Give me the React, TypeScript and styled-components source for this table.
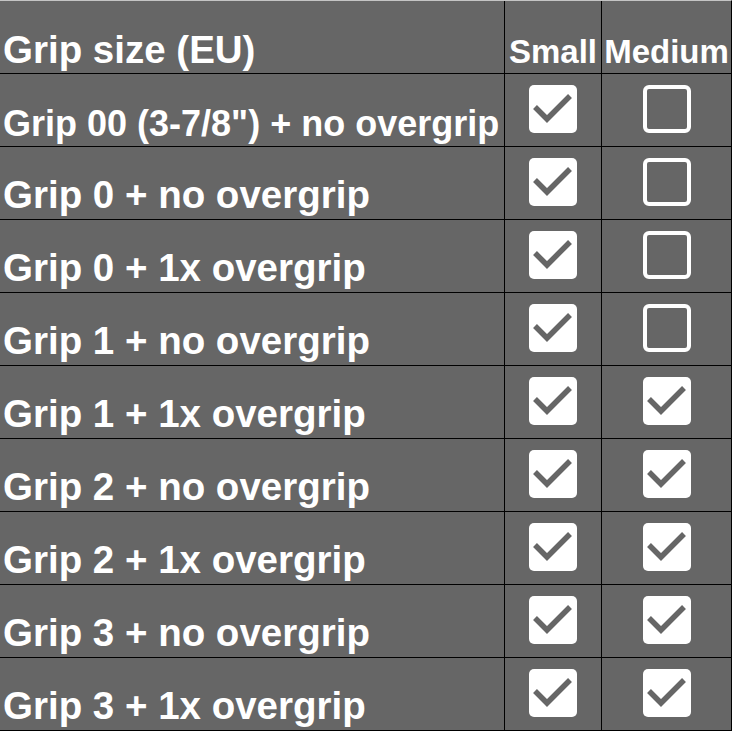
import React from "react";
import styled, { createGlobalStyle } from "styled-components";

const Global = createGlobalStyle`
  html, body { margin: 0; padding: 0; background: #666666; }
  body { font-family: "Liberation Sans", Arial, sans-serif; }
`;

const Table = styled.div`
  display: grid;
  grid-template-columns: 504px 96px 129px;
  grid-auto-rows: 72px;
  column-gap: 1px;
  row-gap: 1px;
  width: 731px;
  background: #000;
  border-top: 1px solid #c4c4c4;
  border-right: 1px solid #000;
  border-bottom: 1px solid #000;
`;

const Cell = styled.div<{ $center?: boolean; $size?: number; $pad?: number }>`
  background: #666666;
  color: #ffffff;
  font-family: "Liberation Sans", Arial, sans-serif;
  font-weight: 700;
  font-size: ${(p) => p.$size ?? 38.5}px;
  line-height: 1.15;
  display: flex;
  align-items: ${(p) => (p.$center ? "center" : "flex-end")};
  justify-content: ${(p) => (p.$center ? "center" : "flex-start")};
  padding: 0 0 ${(p) => p.$pad ?? 2}px ${(p) => (p.$center ? 0 : 3)}px;
  white-space: nowrap;
  overflow: hidden;
`;

const HeadCell = styled(Cell)`
  align-items: flex-end;
  font-size: 33px;
  padding-bottom: 2px;
`;

const Box = styled.svg`
  display: block;
  width: 48px;
  height: 48px;
`;

const Check = ({ on }: { on: boolean }) =>
  on ? (
    <Box viewBox="0 0 48 48">
      <rect x="0" y="0" width="48" height="48" rx="5" fill="#fff" />
      <polyline
        points="6,22 18,34 41,11"
        fill="none"
        stroke="#666666"
        strokeWidth="5.5"
      />
    </Box>
  ) : (
    <Box viewBox="0 0 48 48">
      <rect
        x="2"
        y="2"
        width="44"
        height="44"
        rx="4"
        fill="none"
        stroke="#fff"
        strokeWidth="4"
      />
    </Box>
  );

const rows: { label: string; small: boolean; medium: boolean; size?: number }[] = [
  { label: 'Grip 00 (3-7/8") + no overgrip', small: true, medium: false, size: 36 },
  { label: "Grip 0 + no overgrip", small: true, medium: false },
  { label: "Grip 0 + 1x overgrip", small: true, medium: false },
  { label: "Grip 1 + no overgrip", small: true, medium: false },
  { label: "Grip 1 + 1x overgrip", small: true, medium: true },
  { label: "Grip 2 + no overgrip", small: true, medium: true },
  { label: "Grip 2 + 1x overgrip", small: true, medium: true },
  { label: "Grip 3 + no overgrip", small: true, medium: true },
  { label: "Grip 3 + 1x overgrip", small: true, medium: true },
];

export default function App() {
  return (
    <>
      <Global />
      <Table>
        <Cell $pad={1}>Grip size (EU)</Cell>
        <HeadCell $center>Small</HeadCell>
        <HeadCell $center>Medium</HeadCell>
        {rows.map((r) => (
          <React.Fragment key={r.label}>
            <Cell $size={r.size}>{r.label}</Cell>
            <Cell $center>
              <Check on={r.small} />
            </Cell>
            <Cell $center>
              <Check on={r.medium} />
            </Cell>
          </React.Fragment>
        ))}
      </Table>
    </>
  );
}
